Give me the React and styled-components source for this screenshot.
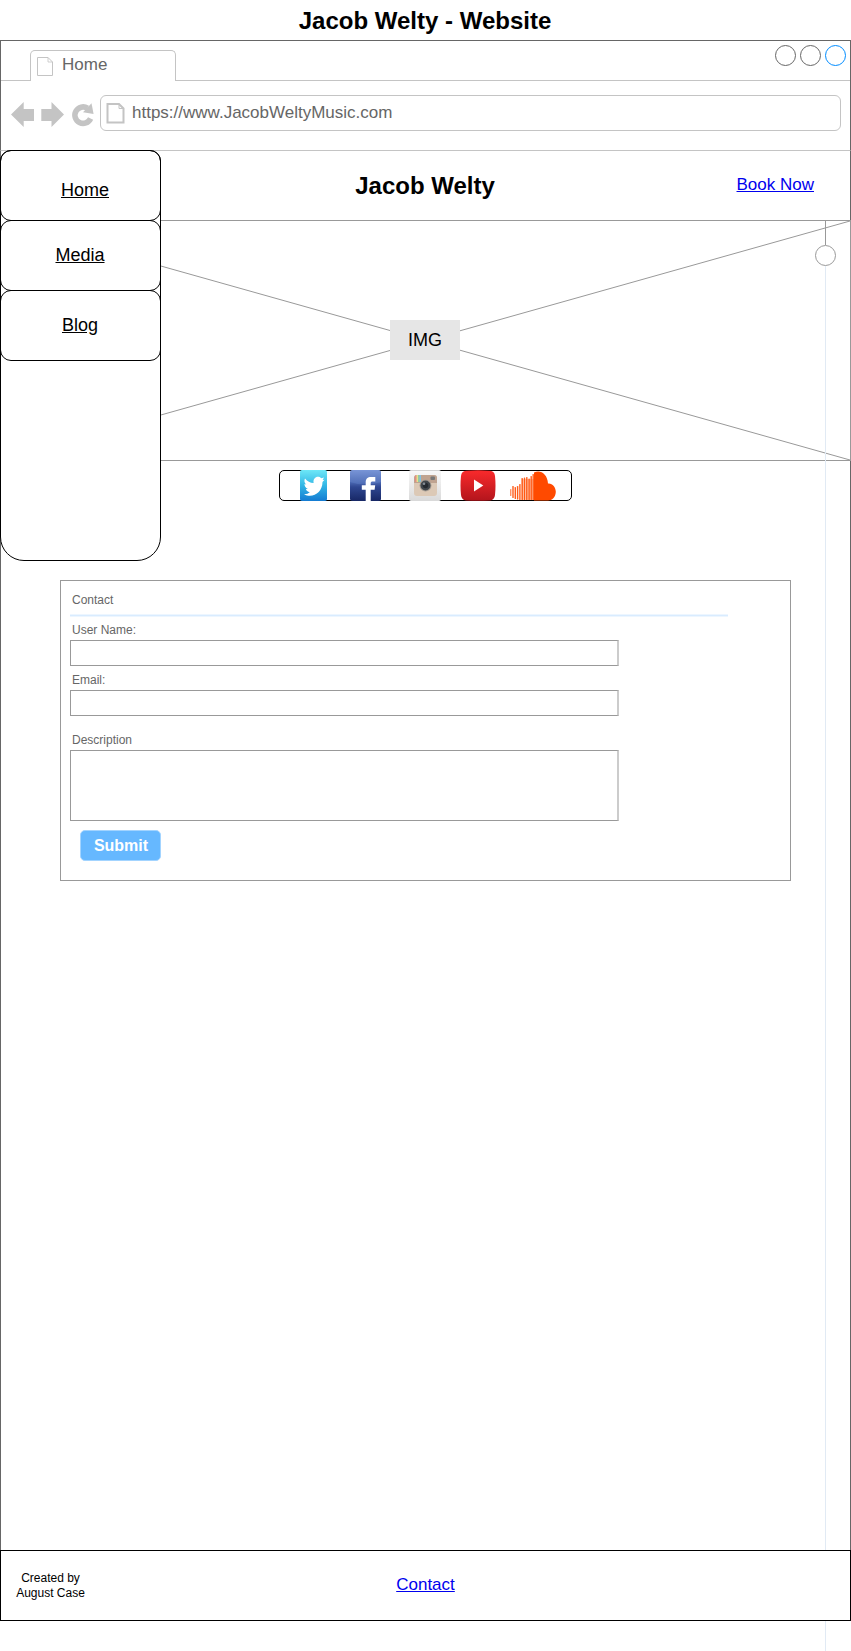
import React from "react";
import styled, { createGlobalStyle } from "styled-components";

const GlobalStyle = createGlobalStyle`
  *, *::before, *::after { box-sizing: border-box; }
  body {
    margin: 0;
    background: #fff;
    color: #000;
    font-family: "Liberation Sans", Arial, Helvetica, sans-serif;
  }
`;

const Page = styled.div`
  position: relative;
  display: flex;
  flex-direction: column;
  width: 851px;
  height: 1651px;
  overflow: hidden;
`;

const PageTitle = styled.h1`
  margin: 0;
  height: 40px;
  padding: 2px 1px 0 0;
  font-size: 24px;
  line-height: 38px;
  text-align: center;
`;

const BrowserChrome = styled.header`
  display: flex;
  flex-direction: column;
  height: 111px;
  border: 1px solid #666;
  border-bottom-color: #c4c4c4;
`;

const TabBar = styled.div`
  display: flex;
  justify-content: space-between;
  height: 40px;
  padding: 9px 4px 0 29px;
  border-bottom: 1px solid #c4c4c4;
`;

const Tab = styled.div`
  display: flex;
  width: 146px;
  height: 31px;
  padding: 6px 0 0 6px;
  gap: 9px;
  border: 1px solid #c4c4c4;
  border-bottom: 0;
  border-radius: 5px 5px 0 0;
  background: #fff;
  color: #666;
  font-size: 17px;
  line-height: 16px;
`;

const WindowButtons = styled.div`
  display: flex;
  gap: 4px;
  margin-top: -5px;
`;

const WindowButton = styled.span`
  width: 21px;
  height: 21px;
  border: 1px solid ${(p) => p.$color};
  border-radius: 50%;
`;

const Toolbar = styled.div`
  display: flex;
  padding: 14px 9px 0 10px;
`;

const NavIcons = styled.svg`
  flex: none;
  width: 89px;
  height: 36px;
`;

const AddressBar = styled.div`
  display: flex;
  flex: 1;
  height: 36px;
  padding: 6px 0 0 5px;
  gap: 7px;
  border: 1px solid #c4c4c4;
  border-radius: 6px;
  color: #666;
  font-size: 17px;
  line-height: 22px;
`;

const SiteHeader = styled.div`
  display: grid;
  grid-template-columns: 1fr auto 1fr;
  align-items: center;
  height: 69px;
  padding: 0 36px 2px 35px;
  border: solid #666;
  border-width: 0 1px;
`;

const SiteName = styled.h2`
  grid-column: 2;
  margin: 2px 0 0;
  font-size: 24px;
  line-height: 28px;
`;

const TextLink = styled.a`
  justify-self: end;
  color: #00e;
  font-size: 17px;
  line-height: 20px;
  text-decoration: underline;
`;

const Hero = styled.div`
  display: grid;
  place-items: center;
  height: 241px;
  border: 1px solid #999;
`;

const Cross = styled.svg`
  grid-area: 1 / 1;
  width: 849px;
  height: 239px;
`;

const HeroLabel = styled.div`
  grid-area: 1 / 1;
  width: 70px;
  height: 40px;
  margin: 0 1px 1px 0;
  background: #e6e6e6;
  font-size: 18px;
  line-height: 40px;
  text-align: center;
`;

const Content = styled.main`
  display: flex;
  flex-direction: column;
  align-items: center;
  height: 1089px;
  padding-top: 9px;
  border: solid #666;
  border-width: 0 1px;
`;

const SocialBar = styled.div`
  display: flex;
  width: 293px;
  height: 31px;
  padding-left: 20px;
  border: 1px solid #000;
  border-radius: 5px;
`;

const SocialIcon = styled.svg`
  display: block;
  flex: none;
  width: ${(p) => p.$w}px;
  height: 31px;
  margin-top: -1px;
  margin-right: ${(p) => p.$gap || 0}px;
`;

const Form = styled.form`
  display: flex;
  flex-direction: column;
  align-items: flex-start;
  width: 731px;
  height: 301px;
  margin-top: 79px;
  padding: 9px;
  border: 1px solid #999;
`;

const Label = styled.label`
  height: 20px;
  padding-left: 2px;
  margin-top: ${(p) => p.$space || 0}px;
  color: #666;
  font-size: 12px;
  line-height: 20px;
`;

const Divider = styled.div`
  width: 658px;
  height: 3px;
  margin: 4px 0 3px;
  border: solid #edf6ff;
  border-width: 1px 0;
  background: #d9ecff;
`;

const Field = styled.div`
  width: 549px;
  height: ${(p) => p.$height}px;
  border: 1px solid #999;
  border-right: 2px solid #ccc;
`;

const SubmitButton = styled.button`
  width: 81px;
  height: 31px;
  margin: 9px 0 0 10px;
  padding: 0 0 0 1px;
  border: 1px solid #a3d4ff;
  border-radius: 5px;
  background: #66b8ff;
  color: #fff;
  font: bold 16px/29px "Liberation Sans", Arial, sans-serif;
`;

const Footer = styled.footer`
  position: relative;
  z-index: 2;
  display: grid;
  grid-template-columns: 1fr auto 1fr;
  align-items: center;
  height: 71px;
  border: 1px solid #000;
  background: #fff;

  ${TextLink} {
    margin-bottom: 2px;
  }
`;

const Credit = styled.div`
  width: 99px;
  font-size: 12px;
  line-height: 15px;
  text-align: center;
`;

const Sidebar = styled.nav`
  position: absolute;
  top: 150px;
  left: 0;
  display: flex;
  flex-direction: column;
  width: 161px;
  height: 411px;
  border: 1px solid #000;
  border-radius: 11px 11px 24px 24px;
  background: #fff;
`;

const SidebarItem = styled.a`
  height: 71px;
  margin: -1px -1px 0;
  padding: ${(p) => p.$shift || 0}px 1px 0 ${(p) => (p.$shift || 0) * 2}px;
  border: 1px solid #000;
  border-radius: 11px;
  color: #000;
  font-size: 18px;
  line-height: 69px;
  text-align: center;
  text-decoration: underline;
`;

const ScrollTrack = styled.div`
  position: absolute;
  top: 221px;
  bottom: 0;
  left: 815px;
  display: flex;
  flex-direction: column;
  align-items: center;
  width: 21px;
`;

const TrackLine = styled.span`
  width: 1px;
  ${(p) => (p.$passed ? "height: 24px; background: #999;" : "flex: 1; background: #e1eaf4;")}
`;

const TrackThumb = styled.span`
  width: 21px;
  height: 21px;
  border: 1px solid #999;
  border-radius: 50%;
  background: #fff;
`;

function DocumentIcon({ size = 16, height = 19, stroke = 1 }) {
  const h = stroke / 2;
  return (
    <svg width={size} height={height} fill="none" stroke="#c4c4c4" strokeWidth={stroke}>
      <path d={`M${h} ${h}H${size - 5}L${size - h} ${5}V${height - h}H${h}Z`} />
      <path d={`M${size - 5} ${h}V5H${size - h}`} strokeWidth="0.8" />
    </svg>
  );
}

function BrowserControls() {
  return (
    <NavIcons viewBox="11 95 89 36" fill="#c4c4c4">
      <path d="M11 114.500 23.700 102V109H34V121H23.700V127Z" />
      <path d="M64 114.500 51.500 102V109H41.300V121H51.500V127Z" />
      <path d="M90.600 118.500A8.200 8.200 0 1 1 87.500 108.200" fill="none" stroke="#c4c4c4" strokeWidth="5.600" />
      <path d="M91.500 103.200 93.600 113.900 83 112.300Z" />
    </NavIcons>
  );
}

function TwitterIcon() {
  return (
    <SocialIcon $w={27} $gap={23} viewBox="0 0 27 31">
      <defs>
        <linearGradient id="tw" x2="0" y2="1">
          <stop stopColor="#6de7f7" />
          <stop offset="0.5" stopColor="#32b6e5" />
          <stop offset="1" stopColor="#147bd2" />
        </linearGradient>
      </defs>
      <rect width="27" height="31" rx="2" fill="url(#tw)" />
      <path
        fill="#fff"
        d="M5 8.500C7.500 11.500 10 12.800 13.600 13 12.700 7.500 18 5 21.200 8.300L24 7.400 22.600 10 24.500 9.700 22.500 12C22.500 22.500 12.500 29 4 24.200 6.500 24.300 8.300 23.500 9.800 22.200 7.600 21.800 6.400 20.500 5.900 18.900H7.800C5.400 17.800 4.500 16 4.500 14L6.300 14.600C4.300 12.800 4 10.600 5 8.500Z"
      />
    </SocialIcon>
  );
}

function FacebookIcon() {
  return (
    <SocialIcon $w={31} $gap={28} viewBox="0 0 31 31">
      <defs>
        <linearGradient id="fb" x2="0" y2="1">
          <stop stopColor="#819bdb" />
          <stop offset="0.4" stopColor="#4966b0" />
          <stop offset="0.55" stopColor="#2f4791" />
          <stop offset="1" stopColor="#172765" />
        </linearGradient>
      </defs>
      <rect width="31" height="31" rx="2.500" fill="url(#fb)" />
      <path d="M0 12Q15 17 31 12V2Q31 0 28 0H3Q0 0 0 2Z" fill="#6989cf" opacity="0.35" />
      <path
        fill="#fff"
        d="M15.700 31V19.800H11.800V15.300H15.700V12.300C15.700 8.800 17.700 7 21 7H25.300V11.500H22.800C21.300 11.500 20.700 12 20.700 13.300V15.300H25.200L24.600 19.800H20.700V31Z"
      />
    </SocialIcon>
  );
}

function InstagramIcon() {
  return (
    <SocialIcon $w={32} $gap={19} viewBox="0 0 32 31">
      <defs>
        <linearGradient id="ig" x2="0" y2="1">
          <stop stopColor="#f7f7f7" stopOpacity="0.85" />
          <stop offset="1" stopColor="#d9d9d9" />
        </linearGradient>
      </defs>
      <rect width="32" height="31" rx="2" fill="url(#ig)" />
      <rect x="5" y="5" width="23" height="21" rx="3" fill="#dcc9b6" />
      <path d="M5 13V8Q5 5 8 5H25Q28 5 28 8V13Z" fill="#bfa390" />
      <path d="M6 5.500H7.500V12H6Z" fill="#e58b83" />
      <path d="M7.500 5H9V12H7.500Z" fill="#eddc8a" />
      <path d="M9 5H10.500V12H9Z" fill="#8fcf9d" />
      <path d="M10.500 5H12V12H10.500Z" fill="#83c2e3" />
      <rect x="21.500" y="6.500" width="4.500" height="3.500" rx="1" fill="#777" />
      <circle cx="16.500" cy="15.500" r="6" fill="#aaa096" />
      <circle cx="16.500" cy="15.500" r="5" fill="#41464b" />
      <circle cx="16.500" cy="15.500" r="2.800" fill="#252a30" />
      <circle cx="15" cy="13.700" r="1.300" fill="#858d95" />
    </SocialIcon>
  );
}

function YoutubeIcon() {
  return (
    <SocialIcon $w={36} $gap={14} viewBox="0 0 36 31">
      <defs>
        <linearGradient id="yt" x2="0" y2="1">
          <stop stopColor="#fa2a2c" />
          <stop offset="1" stopColor="#b3151c" />
        </linearGradient>
      </defs>
      <path
        d="M6 .7Q18-.2 30 .7 34.500 1 35 6 36 15.500 35 25 34.500 30 30 30.400 18 31.300 6 30.400 1.500 30 1 25 0 15.500 1 6 1.500 1 6 .7Z"
        fill="url(#yt)"
      />
      <path d="M14 9.500 23.300 15.500 14 21.500Z" fill="#fff" />
    </SocialIcon>
  );
}

const WAVE_BARS = [
  [0, 19, 26],
  [2.3, 16, 28],
  [4.6, 17, 29],
  [6.9, 16, 29.5],
  [9.2, 14, 30],
  [11.5, 8, 30],
  [13.8, 7.5, 30],
  [16.1, 7, 30],
  [18.4, 8.500, 30],
  [20.5, 6, 30],
  [22.5, 4, 30],
];

function SoundcloudIcon() {
  return (
    <SocialIcon $w={46} viewBox="0 0 46 31" fill="#ff4a00">
      {WAVE_BARS.map(([x, top, bottom]) => (
        <rect key={x} x={x} y={top} width="1.400" height={bottom - top} rx="0.600" opacity={x < 1 ? 0.6 : 0.9} />
      ))}
      <rect x="11.500" y="9" width="12.500" height="21" opacity="0.25" />
      <path d="M24 2.500C30-.8 37.500 3.500 38 13.500 42.500 13 46 17.500 45.800 22 45.600 27 42 30.500 38 30.500H24Z" />
    </SocialIcon>
  );
}

export default function App() {
  return (
    <Page>
      <GlobalStyle />
      <PageTitle>Jacob Welty - Website</PageTitle>

      <BrowserChrome>
        <TabBar>
          <Tab>
            <DocumentIcon />
            <span>Home</span>
          </Tab>
          <WindowButtons>
            <WindowButton $color="#666" />
            <WindowButton $color="#666" />
            <WindowButton $color="#008cff" />
          </WindowButtons>
        </TabBar>
        <Toolbar>
          <BrowserControls />
          <AddressBar>
            <svg width="19" height="22" fill="none" stroke="#c4c4c4" strokeWidth="2">
              <path d="M1.500 2H13L17.500 6.500V20.500H1.500Z" />
              <path d="M13 2V6.500H17.500" strokeWidth="1" />
            </svg>
            <span>https://www.JacobWeltyMusic.com</span>
          </AddressBar>
        </Toolbar>
      </BrowserChrome>

      <SiteHeader>
        <SiteName>Jacob Welty</SiteName>
        <TextLink>Book Now</TextLink>
      </SiteHeader>

      <Hero>
        <Cross viewBox="0 0 849 239" stroke="#999">
          <path d="M0 0 849 239M0 239 849 0" />
        </Cross>
        <HeroLabel>IMG</HeroLabel>
      </Hero>

      <Content>
        <SocialBar>
          <TwitterIcon />
          <FacebookIcon />
          <InstagramIcon />
          <YoutubeIcon />
          <SoundcloudIcon />
        </SocialBar>

        <Form>
          <Label as="div">Contact</Label>
          <Divider />
          <Label>User Name:</Label>
          <Field $height={26} />
          <Label $space={4}>Email:</Label>
          <Field $height={26} />
          <Label $space={14}>Description</Label>
          <Field $height={71} />
          <SubmitButton type="button">Submit</SubmitButton>
        </Form>
      </Content>

      <Footer>
        <Credit>
          Created by
          <br />
          August Case
        </Credit>
        <TextLink>Contact</TextLink>
      </Footer>

      <Sidebar>
        <SidebarItem $shift={5}>Home</SidebarItem>
        <SidebarItem>Media</SidebarItem>
        <SidebarItem>Blog</SidebarItem>
      </Sidebar>

      <ScrollTrack>
        <TrackLine $passed />
        <TrackThumb />
        <TrackLine />
      </ScrollTrack>
    </Page>
  );
}
